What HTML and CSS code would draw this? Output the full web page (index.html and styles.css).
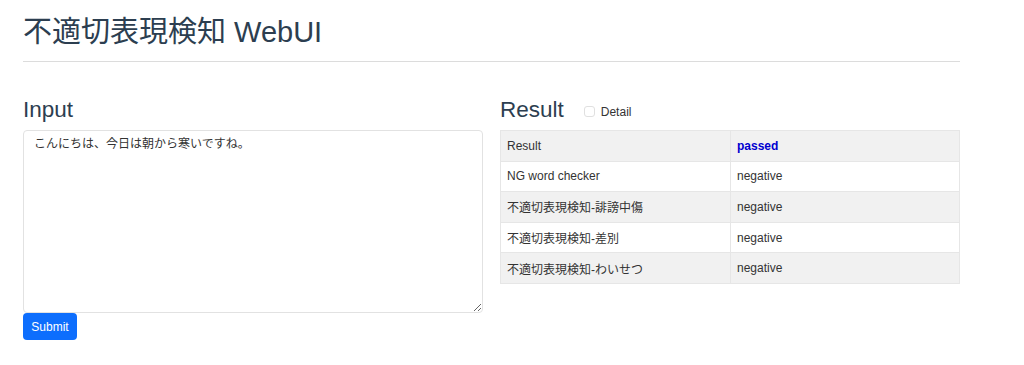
FILE: index.html
```html
<!DOCTYPE html>
<html lang="ja">
<head>
<meta charset="utf-8">
<title>不適切表現検知 WebUI</title>
<link rel="stylesheet" href="styles.css">
</head>
<body>
<div class="container">
  <h1 class="title">不適切表現検知 WebUI</h1>
  <hr class="rule">
  <div class="grid">
    <div class="col">
      <h2 class="heading">Input</h2>
      <textarea class="input">こんにちは、今日は朝から寒いですね。</textarea>
      <button class="btn">Submit</button>
    </div>
    <div class="col">
      <div class="result-head">
        <h2 class="heading">Result</h2>
        <label class="detail"><input type="checkbox" class="check"><span>Detail</span></label>
      </div>
      <table class="table">
        <tr class="odd"><td>Result</td><td class="passed">passed</td></tr>
        <tr><td>NG word checker</td><td>negative</td></tr>
        <tr class="odd"><td>不適切表現検知-誹謗中傷</td><td>negative</td></tr>
        <tr><td>不適切表現検知-差別</td><td>negative</td></tr>
        <tr class="odd"><td>不適切表現検知-わいせつ</td><td>negative</td></tr>
      </table>
    </div>
  </div>
</div>
</body>
</html>
```

FILE: styles.css
```css
* { box-sizing: border-box; }
body {
  margin: 0;
  background: #fff;
  font-family: "Liberation Sans", "Noto Sans CJK JP", sans-serif;
  color: #212529;
}
.container {
  width: 937px;
  margin-left: 23px;
}
.title {
  margin: 15px 0 0;
  font-size: 29px;
  line-height: 34px;
  font-weight: 400;
  color: #2c3e50;
}
.rule {
  margin: 12px 0 0;
  border: 0;
  border-top: 1px solid #dcdcdc;
}
.grid {
  display: grid;
  grid-template-columns: 460px 460px;
  column-gap: 17px;
  margin-top: 34px;
}
.heading {
  margin: 0;
  font-size: 22.5px;
  line-height: 28px;
  font-weight: 400;
  color: #2c3e50;
}
.input {
  display: block;
  width: 460px;
  height: 183px;
  margin-top: 6px;
  padding: 5px 10px;
  border: 1px solid #e2e2e2;
  border-radius: 4px;
  font-family: "Liberation Sans", "Noto Sans CJK JP", sans-serif;
  font-size: 12px;
  line-height: 16px;
  color: #333;
  resize: vertical;
}
.btn {
  display: block;
  width: 54px;
  height: 27px;
  padding: 0;
  border: 0;
  border-radius: 4px;
  background: #0d6efd;
  color: #fff;
  font-family: "Liberation Sans", sans-serif;
  font-size: 12px;
}
.result-head {
  display: flex;
  align-items: center;
  gap: 20px;
}
.detail {
  display: flex;
  align-items: center;
  gap: 6px;
  font-size: 12px;
  color: #333;
  margin-top: 3px;
}
.check {
  margin: 0;
  width: 11px;
  height: 11px;
  appearance: none;
  border: 1px solid #e0e0e0;
  border-radius: 3px;
  background: #fff;
}
.table {
  width: 460px;
  margin-top: 6px;
  border-collapse: collapse;
  font-size: 12px;
  color: #333;
}
.table td {
  height: 30.6px;
  padding: 0 6px;
  border: 1px solid #e6e6e6;
  vertical-align: middle;
}
.table td:first-child { width: 230px; }
.table tr.odd td { background: #f1f1f1; }
.passed {
  color: #0000d0;
  font-weight: 700;
}
```
